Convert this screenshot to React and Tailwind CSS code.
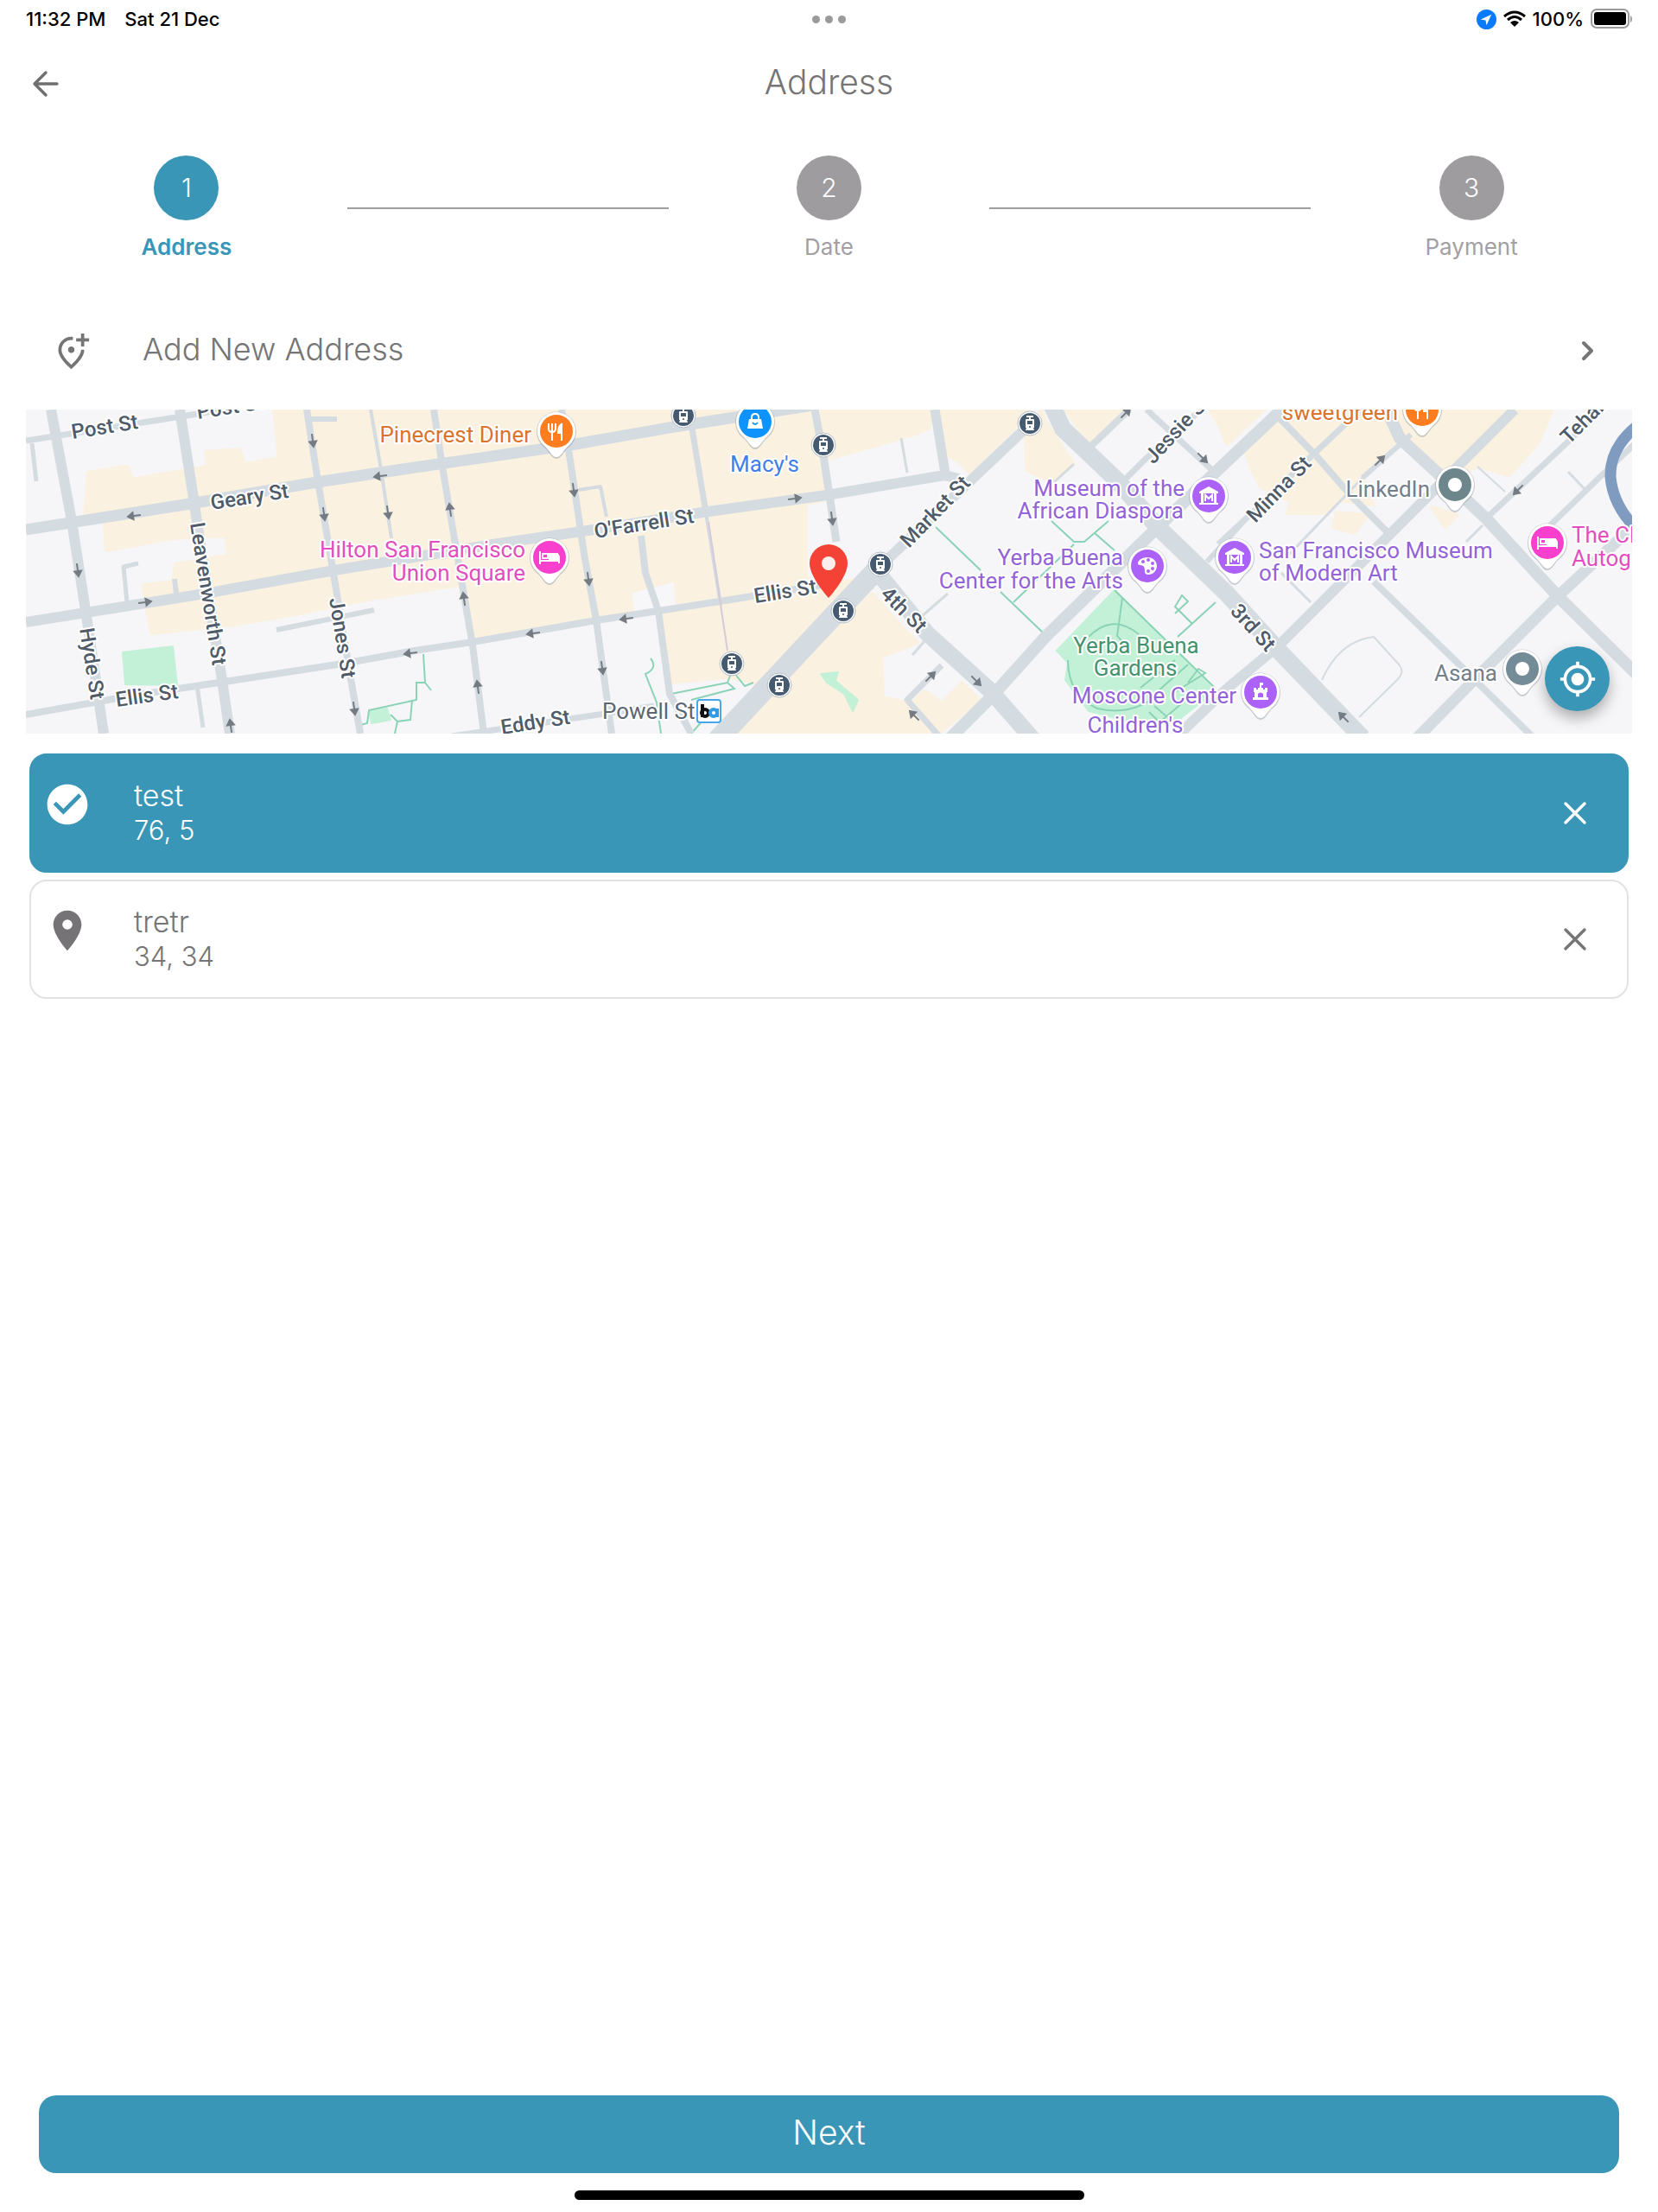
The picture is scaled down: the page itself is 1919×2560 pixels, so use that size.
import React, { useState } from 'react';
import { MdCheckCircle, MdPlace, MdGpsFixed, MdOutlineAddLocationAlt } from 'react-icons/md';

const STEPS = ['Address', 'Date', 'Payment'];

const SAVED_ADDRESSES = [
  { id: 1, name: 'test', detail: '76, 5' },
  { id: 2, name: 'tretr', detail: '34, 34' },
];

// Map data: [path, stroke width]
const ROADS = [
  ['M29 0L53 129L70 239L90 375', 12],
  ['M178 0L193 96L198 130L227 313L236 375', 12],
  ['M325 0L338 83L357 196L374 300L387 375', 8],
  ['M399 0L411 69L423 149', 4],
  ['M472 0L482 66L505 203L517 273L530 375', 8],
  ['M620 0L630 59L647 173L660 243L678 375', 8],
  ['M712 146L717 189L732 233L745 329L770 375', 8],
  ['M770 16L787 119', 7],
  ['M787 119L803 219', 4],
  ['M913 0L923 53L930 99L938 153', 9],
  ['M1052 0L1065 80', 11],
  ['M1013 33L1020 73', 3],
  ['M0 36L180 8L300 -12', 7],
  ['M0 139L190 109L337 84L450 67L630 41L750 20L917 -6', 13],
  ['M0 246L207 213L357 186L540 156L657 139L783 119L927 99L1063 76L1080 80', 12],
  ['M0 353L123 331L223 316L373 293L450 279L517 269L660 244L803 222L940 200', 8],
  ['M493 378L663 353L727 343', 7],
  ['M798 385L910 265L985 185', 24],
  ['M985 185L1160 19', 12],
  ['M987 190L1043 259L1117 326L1166 382', 19],
  ['M1187 -6L1200 22L1263 82L1310 136L1390 213L1450 279L1547 380', 20],
  ['M1070 380L1117 333L1180 263L1310 136L1390 60L1460 -6', 14],
  ['M1270 83L1297 56L1367 -6', 7],
  ['M1232 43L1277 0', 8],
  ['M1297 0L1373 70', 7],
  ['M1380 156L1423 116L1493 49L1545 0', 7],
  ['M1447 6L1493 53L1533 99L1577 143', 8],
  ['M1575 0L1590 33L1640 79L1690 126L1773 216L1866 308', 14],
  ['M1723 0L1673 50L1553 170L1450 273L1390 323L1325 385', 12],
  ['M1603 29L1547 79', 6],
  ['M1547 79L1457 173', 3],
  ['M1860 -36L1783 39L1690 126', 7],
  ['M1866 36L1827 73L1760 138', 7],
  ['M1785 72L1804 92', 3],
  ['M1866 130L1773 216L1683 306L1610 380', 13],
  ['M1560 199L1663 299L1745 380', 8],
  ['M1680 66L1712 95', 2],
  ['M7 39L12 83', 5],
  ['M327 11L360 11', 6],
  ['M130 178L113 182L117 223', 5],
  ['M172 196L174 213', 6],
  ['M290 255L403 232', 6],
  ['M198 319L205 368', 5],
  ['M640 93L665 89L672 124', 4],
  ['M1067 213L1037 239', 3],
  ['M1060 296L1020 336L1057 378', 7],
  ['M1026 284L1040 268', 3],
  ['M1213 63L1190 84', 3],
  ['M1410 129L1367 176', 6],
  ['M1453 189L1487 223', 3],
  ['M1667 153L1686 134', 3],
  ['M1500 313Q1520 268 1560 263L1590 296Q1596 304 1587 313L1543 356', 2],
];

const SHOPPING_AREAS = [
  'M287 0L293 56L253 63L247 46L208 49L210 66L123 81L118 66L72 73L68 121L90 123L93 163L170 149L230 146L235 169L173 179L170 199L135 203L145 259L243 249L317 236L400 219L503 203L517 267L660 244L732 233L747 316L810 310L850 317L917 260L977 195L903 205L903 109L923 105L925 58L1025 30L1045 22L1050 0Z',
  'M1057 0L1067 53L1080 60L1092 73L1143 23L1160 0Z',
  'M1157 30L1158 70L1187 83L1213 63L1180 14L1175 0Z',
  'M1203 0L1230 38L1268 0Z',
  'M910 279L980 213L1017 255L1032 270L990 286L992 333L1022 340L1057 375L815 375Z',
  'M1083 316L1103 336L1057 375L1025 340L1040 326L1060 340Z',
  'M1370 0L1433 0L1390 40L1382 20Z',
  'M1443 20L1450 0L1767 0L1750 39L1717 76L1680 66L1640 79L1590 33L1545 75L1560 110L1520 105L1505 120L1460 120L1463 106L1430 90L1420 73L1412 50Z',
  'M1517 119L1553 122L1537 143L1513 136Z',
  'M1627 113L1657 122L1643 136Z',
];

const PARKS = [
  'M112 281L170 274L175 319L115 318Z',
  'M397 348L418 346L422 359L400 363Z',
  'M1260 209L1313 263L1377 326L1330 362L1277 361L1230 349L1203 313L1206 293L1193 279Z',
  'M920 306L940 304L937 314L963 336L957 349L947 329L927 316Z',
];

const FOOTPATHS = [
  'M460 283L462 316L452 316L452 336L397 348L395 363L383 366',
  'M447 336L445 359L430 361L427 375M430 361L422 353M462 316L469 325',
  'M723 288Q732 299 717 306L730 339L735 375',
  'M747 329L812 316L820 323L770 336M812 316L815 308M820 305L832 320L842 316M770 375L785 358',
  'M1053 136L1105 186M1128 211L1178 259',
  'M1187 129L1213 153L1225 153L1253 129M1237 143L1260 163M1143 223L1213 156',
  'M1260 209L1377 323M1377 223L1333 263M1350 248L1330 228L1338 215L1345 222L1330 236',
  'M1269 218L1263 262L1275 275',
  'M1230 263Q1258 235 1288 260M1206 290Q1206 330 1240 346Q1280 355 1310 330',
  'M1290 322L1330 290M1300 335L1345 295M1325 330L1365 305L1357 300L1345 316M1300 350L1312 362L1345 334M1306 343L1320 355',
];

const ARROWS = [
  [125, 123, 172], [332, 36, 82], [345, 121, 82], [410, 77, 172], [419, 119, 82],
  [60, 186, 82], [138, 223, -8], [445, 282, 172], [380, 346, 82], [237, 366, -98],
  [491, 116, -98], [634, 93, 82], [651, 196, 82], [507, 219, -98], [587, 259, 172],
  [695, 242, 172], [667, 299, 82], [523, 321, -98], [890, 103, -8], [933, 126, 82],
  [1273, 4, -45], [1362, 56, 45], [1047, 309, -45], [1100, 314, 45], [1028, 354, -135],
  [1567, 59, -45], [1727, 93, 135], [1525, 356, -135],
];

const STREET_LABELS = [
  ['Post St', 54, 34, -9],
  ['Post St', 199, 11, -9],
  ['Geary St', 215, 116, -9],
  ['Leavenworth St', 190, 132, 81],
  ['Hyde St', 62, 254, 81],
  ['Jones St', 351, 219, 81],
  ['Ellis St', 105, 344, -8],
  ["O'Farrell St", 659, 149, -9],
  ['Ellis St', 844, 224, -9],
  ['Eddy St', 551, 376, -9],
  ['Market St', 1022, 161, -46],
  ['4th St', 988, 215, 45],
  ['Jessie St', 1305, 64, -47],
  ['Minna St', 1423, 132, -46],
  ['3rd St', 1393, 234, 48],
  ['Teham', 1786, 41, -45],
];

const PLACE_LABELS = [
  ['Pinecrest Diner', 585, 38, 'end', '#d9742c'],
  ["Macy's", 855, 72, 'middle', '#3f7fe6'],
  ['Hilton San Francisco', 578, 171, 'end', '#e04fbd'],
  ['Union Square', 578, 198, 'end', '#e04fbd'],
  ['Museum of the', 1341, 100, 'end', '#9363d8'],
  ['African Diaspora', 1340, 126, 'end', '#9363d8'],
  ['Yerba Buena', 1270, 180, 'end', '#9363d8'],
  ['Center for the Arts', 1270, 207, 'end', '#9363d8'],
  ['Yerba Buena', 1285, 282, 'middle', '#43936f'],
  ['Gardens', 1284, 308, 'middle', '#43936f'],
  ['Moscone Center', 1401, 340, 'end', '#9363d8'],
  ["Children's", 1284, 374, 'middle', '#9363d8'],
  ['San Francisco Museum', 1427, 172, 'start', '#9363d8'],
  ['of Modern Art', 1427, 198, 'start', '#9363d8'],
  ['sweetgreen', 1588, 12, 'end', '#d9742c'],
  ['LinkedIn', 1625, 101, 'end', '#738089'],
  ['Asana', 1703, 314, 'end', '#738089'],
  ['The Cl', 1789, 154, 'start', '#e04fbd'],
  ['Autog', 1789, 181, 'start', '#e04fbd'],
  ['Powell St', 667, 358, 'start', '#5b6672'],
];

const PINS = [
  ['food', 614, 25, '#ff7c1f'],
  ['food', 1616, 0, '#ff7c1f'],
  ['bag', 844, 14, '#0d93fb'],
  ['bed', 606, 171, '#f93fcd'],
  ['bed', 1761, 154, '#f93fcd'],
  ['museum', 1369, 100, '#ac62f8'],
  ['museum', 1399, 171, '#ac62f8'],
  ['palette', 1298, 181, '#ac62f8'],
  ['castle', 1429, 327, '#ac62f8'],
  ['dot', 1654, 87, '#6c868c'],
  ['dot', 1732, 300, '#748b98'],
];

const TRAM_STOPS = [
  [761, 7], [923, 41], [817, 294], [872, 319], [1162, 16], [989, 179], [946, 233],
];

const PinGlyph = ({ kind }) => {
  switch (kind) {
    case 'food':
      return (
        <g fill="none" stroke="#fff" strokeWidth="2">
          <path d="M-9 -9V-3Q-9 1 -5 1Q-1 1 -1 -3V-9M-5 -9V11" />
          <path d="M6 11V-8Q2 -6 2 2H6" fill="#fff" />
        </g>
      );
    case 'bag':
      return (
        <g>
          <path d="M-7 -3H7L9 8H-9Z" fill="#fff" />
          <path d="M-4 -3V-5Q-4 -9 0 -9Q4 -9 4 -5V-3" fill="none" stroke="#fff" strokeWidth="2" />
          <path d="M-3 1Q0 5 3 1" fill="none" stroke="#0d93fb" strokeWidth="2" />
        </g>
      );
    case 'bed':
      return (
        <g fill="none" stroke="#fff" strokeWidth="2">
          <path d="M-11 -7V8M-11 4H11M11 7V-1L9 -4H0V4" />
          <path d="M0 -4H9L11 0V4H0Z" fill="#fff" />
          <rect x="-8" y="-4" width="6" height="5" />
        </g>
      );
    case 'museum':
      return (
        <g fill="#fff">
          <path d="M-11 -5L0 -11L11 -5V-3H-11ZM-9 -3H-6V8H-9ZM6 -3H9V8H6ZM-11 8H11V10H-11Z" />
          <path d="M-4 6V-1L0 3L4 -1V6" fill="none" stroke="#fff" strokeWidth="2" />
        </g>
      );
    case 'palette':
      return (
        <g>
          <path d="M0 -10C-7 -10 -11 -6 -11 -3C-11 0 -6 -2 -4 1C-2 4 -5 10 1 10C7 10 11 5 11 0C11 -6 6 -10 0 -10Z" fill="#fff" />
          <g fill="#ac62f8">
            <circle cx="-5" cy="-5" r="2" />
            <circle cx="1" cy="-7" r="2" />
            <circle cx="6" cy="-3" r="2" />
            <circle cx="6" cy="3" r="2" />
            <circle cx="1" cy="6" r="2" />
          </g>
        </g>
      );
    case 'castle':
      return (
        <path
          d="M-1 -11H3V-8H1V-5H3V-3H5V-5H8V0H7V6H9V9H-9V6H-7V0H-8V-5H-5V-3H-3V-5H-1ZM-3 6H3V2Q0 -1 -3 2Z"
          fill="#fff"
        />
      );
    default:
      return <circle r="8" fill="#fff" />;
  }
};

const MapPin = ({ kind, x, y, color }) => (
  <g transform={`translate(${x} ${y})`}>
    <path d="M0 32C-6 32 -8 23 -15 18A23 23 0 1 1 15 18C8 23 6 32 0 32Z" fill="#7f8a96" opacity="0.4" />
    <path d="M0 30C-5 30 -8 22 -15 16A22 22 0 1 1 15 16C8 22 5 30 0 30Z" fill="#fff" />
    <circle r="19" fill={color} />
    <PinGlyph kind={kind} />
  </g>
);

const TramStop = ({ x, y }) => (
  <g transform={`translate(${x} ${y})`}>
    <circle r="14" fill="#fff" stroke="#b3bcc6" strokeWidth="1" />
    <circle r="12" fill="#465b70" />
    <path d="M-4 -9H4V-7H1V-5H4Q5 -5 5 -4V5H4L5 8H-5L-4 5H-5V-4Q-5 -5 -4 -5H-1V-7H-4Z" fill="#fff" />
    <path d="M-3 -3H3V1H-3Z" fill="#465b70" />
    <circle cy="4" r="1" fill="#465b70" />
  </g>
);

const AddressMap = () => (
  <svg
    viewBox="0 0 1859 375"
    preserveAspectRatio="xMidYMid slice"
    className="block h-[375px] w-full bg-[#f6f6f8]"
    role="img"
    aria-label="Map"
  >
    {SHOPPING_AREAS.map((d) => (
      <path key={d} d={d} fill="#faf1e0" stroke="#faf1e0" strokeWidth="4" strokeLinejoin="round" />
    ))}
    <path d="M702 212L750 200L752 228L704 236Z" fill="#f7f6f8" />
    {PARKS.map((d) => (
      <path key={d} d={d} fill="#c3f1d7" stroke="#c3f1d7" strokeWidth="2" strokeLinejoin="round" />
    ))}
    {FOOTPATHS.map((d) => (
      <path key={d} d={d} fill="none" stroke="#8bd3b6" strokeWidth="2" />
    ))}
    {ROADS.map(([d, width]) => (
      <path key={d} d={d} fill="none" stroke="#d4dbe1" strokeWidth={width} strokeLinejoin="round" />
    ))}
    <path d="M790 130L803 219L812 279" fill="none" stroke="#d5cbd9" strokeWidth="2" />
    <path d="M1866 18Q1833 44 1834 78Q1837 112 1866 140" fill="none" stroke="#7f9bbf" strokeWidth="13" />

    {ARROWS.map(([x, y, angle]) => (
      <path
        key={`${x}-${y}`}
        d="M-8 0H6M1 -4L7 0L1 4Z"
        transform={`translate(${x} ${y}) rotate(${angle})`}
        fill="#757b82"
        stroke="#757b82"
        strokeWidth="2"
      />
    ))}

    {/* Labels */}
    <g fontFamily="Roboto, sans-serif" fontSize="26" paintOrder="stroke" stroke="#fff" strokeWidth="4" strokeLinejoin="round">
      {STREET_LABELS.map(([text, x, y, angle]) => (
        <text key={`${text}-${x}`} transform={`translate(${x} ${y}) rotate(${angle})`} fill="#4f5b68" fontWeight="500" fontSize="24">
          {text}
        </text>
      ))}
      {PLACE_LABELS.map(([text, x, y, anchor, color]) => (
        <text key={`${text}-${y}`} x={x} y={y} textAnchor={anchor} fill={color}>
          {text}
        </text>
      ))}
    </g>

    {TRAM_STOPS.map(([x, y]) => (
      <TramStop key={x} x={x} y={y} />
    ))}
    <rect x="777" y="336" width="27" height="26" rx="3" fill="#fff" stroke="#45a8ea" strokeWidth="2" />
    <g fill="none" strokeWidth="4">
      <path d="M783 341V356" stroke="#111" />
      <circle cx="786" cy="351" r="4" stroke="#111" />
      <circle cx="796" cy="351" r="4" stroke="#2f9be6" />
      <path d="M800 346V356" stroke="#2f9be6" />
    </g>
    {PINS.map(([kind, x, y, color]) => (
      <MapPin key={x} kind={kind} x={x} y={y} color={color} />
    ))}
    <path
      d="M929 218C929 218 951 194 951 178A22 22 0 0 0 907 178C907 194 929 218 929 218Z"
      fill="#f44336"
    />
    <circle cx="929" cy="178" r="8" fill="#fdeeee" />
  </svg>
);

const StatusBar = () => (
  <div className="grid h-11 grid-cols-3 items-center px-[30px] text-[22px] font-medium text-black">
    <div className="flex gap-[22px]">
      <span>11:32 PM</span>
      <span>Sat 21 Dec</span>
    </div>
    <div className="flex justify-center gap-[6px]">
      <span className="size-[9px] rounded-full bg-[#9a9a9c]"></span>
      <span className="size-[9px] rounded-full bg-[#9a9a9c]"></span>
      <span className="size-[9px] rounded-full bg-[#9a9a9c]"></span>
    </div>
    <div className="flex items-center justify-end gap-2">
      <svg viewBox="0 0 24 24" className="size-[23px]">
        <circle cx="12" cy="12" r="12" fill="#0a7aff" />
        <path d="M18 6L5 12L11 13L12 19Z" fill="#fff" />
      </svg>
      <svg viewBox="0 0 26 20" className="h-5 w-[26px]">
        <g fill="none" stroke="#000" strokeWidth="3">
          <path d="M1 7Q13 -3 25 7" />
          <path d="M5 11Q13 4 21 11" />
        </g>
        <path d="M8 14Q13 10 18 14L13 19Z" />
      </svg>
      <span>100%</span>
      <svg viewBox="0 0 48 24" className="h-6 w-12">
        <rect x="1" y="1" width="43" height="21" rx="6" fill="none" stroke="#9b9b9b" strokeWidth="2" />
        <rect x="4" y="4" width="37" height="15" rx="3" />
        <path d="M46 8Q48 9 48 12Q48 15 46 16Z" fill="#9b9b9b" />
      </svg>
    </div>
  </div>
);

const Header = () => (
  <header className="grid h-[106px] grid-cols-[1fr_auto_1fr] items-center px-[30px]">
    <button type="button" aria-label="Back" className="justify-self-start">
      <svg viewBox="0 0 46 46" className="size-[46px]" fill="none" stroke="#6f6f6f" strokeWidth="3.4" strokeLinecap="round" strokeLinejoin="round">
        <path d="M36 23H10M23 10L10 23L23 36" />
      </svg>
    </button>
    <h1 className="pb-1 text-[39px] leading-[46px] font-light text-[#757575]">Address</h1>
  </header>
);

const Stepper = ({ current }) => (
  <ol className="grid grid-cols-5 px-[30px] pt-[30px]">
    {STEPS.map((step, index) => {
      const active = index === current;
      return (
        <React.Fragment key={step}>
          {index > 0 && <li aria-hidden="true" className="mt-[60px] h-[2px] bg-[#9f9ca0]"></li>}
          <li className="flex flex-col items-center gap-4">
            <span
              className={`flex size-[75px] items-center justify-center rounded-full text-[30px] font-light text-white ${
                active ? 'bg-[#3a96b7]' : 'bg-[#9f9ca0]'
              }`}
            >
              {index + 1}
            </span>
            <span className={`text-[26px] leading-[30px] ${active ? 'font-semibold text-[#3a96b7]' : 'text-[#a2a0a3]'}`}>
              {step}
            </span>
          </li>
        </React.Fragment>
      );
    })}
  </ol>
);

const AddressCard = ({ address, selected, onSelect, onRemove }) => (
  <li
    className={`flex h-[138px] items-center rounded-[20px] border-2 pr-[46px] pl-[14px] ${
      selected ? 'border-[#3a96b7] bg-[#3a96b7] text-white' : 'border-[#e2e2e2] bg-white text-[#757575]'
    }`}
  >
    <button type="button" onClick={onSelect} className="flex flex-1 items-start gap-[49px] text-left font-light">
      {selected ? <MdCheckCircle className="mt-[2px] size-14" /> : <MdPlace className="mt-[2px] size-14 text-[#757375]" />}
      <span className="flex flex-col">
        <span className="text-[34px] leading-[40px]">{address.name}</span>
        <span className="text-[31px] leading-[40px]">{address.detail}</span>
      </span>
    </button>
    <button type="button" aria-label={`Remove ${address.name}`} onClick={onRemove}>
      <svg viewBox="0 0 28 28" className="size-7" fill="none" stroke="currentColor" strokeWidth="3.4" strokeLinecap="round">
        <path d="M3 3L25 25M25 3L3 25" />
      </svg>
    </button>
  </li>
);

const App = () => {
  const [addresses, setAddresses] = useState(SAVED_ADDRESSES);
  const [selectedId, setSelectedId] = useState(1);

  return (
    <div className="flex min-h-screen flex-col bg-white font-['Inter',sans-serif]">
      <StatusBar />
      <Header />
      <Stepper current={0} />

      {/* Add new address */}
      <button type="button" className="mt-[60px] flex h-[90px] items-center pr-[72px] pl-[60px] text-[#757575]">
        <MdOutlineAddLocationAlt className="size-[45px]" />
        <span className="ml-[60px] pb-1 text-[36px] leading-[40px] font-light">Add New Address</span>
        <svg viewBox="0 0 24 28" className="ml-auto h-7 w-6" fill="none" stroke="#757575" strokeWidth="4" strokeLinecap="round" strokeLinejoin="round">
          <path d="M10 5L19 14L10 23" />
        </svg>
      </button>

      <div className="relative mx-[30px] mt-[23px]">
        <AddressMap />
        <button
          type="button"
          aria-label="Use my location"
          className="absolute right-[26px] bottom-[26px] flex size-[75px] items-center justify-center rounded-full bg-[#3a96b7] text-white shadow-[0_8px_16px_rgba(0,0,0,0.3)]"
        >
          <MdGpsFixed className="size-11" />
        </button>
      </div>

      <ul className="mx-[34px] mt-[23px] flex flex-col gap-2">
        {addresses.map((address) => (
          <AddressCard
            key={address.id}
            address={address}
            selected={address.id === selectedId}
            onSelect={() => setSelectedId(address.id)}
            onRemove={() => setAddresses(addresses.filter((a) => a.id !== address.id))}
          />
        ))}
      </ul>

      {/* Footer */}
      <div className="mt-auto px-[45px] pb-[14px]">
        <button type="button" className="h-[90px] w-full rounded-[20px] bg-[#3a96b7] pb-1 text-[39px] font-light text-white">
          Next
        </button>
        <div className="mx-auto mt-5 h-[11px] w-[590px] rounded-full bg-black"></div>
      </div>
    </div>
  );
};

export default App;
